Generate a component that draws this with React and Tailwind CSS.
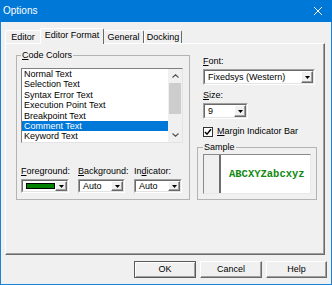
import React from "react";

function Arrow() {
  return (
    <svg width="5" height="3" viewBox="0 0 5 3">
      <path d="M0 0H5L2.5 3Z" fill="#000" />
    </svg>
  );
}

function DropBtn() {
  return (
    <div className="flex h-full w-[12px] items-center justify-center border border-t-white border-l-white border-b-[#696969] border-r-[#696969] bg-[#f0f0f0] shadow-[inset_-1px_-1px_0_#a0a0a0]">
      <Arrow />
    </div>
  );
}

function Combo({ className, children }) {
  return (
    <div className={`flex border border-t-[#a0a0a0] border-l-[#a0a0a0] border-b-white border-r-white ${className}`}>
      <div className="flex flex-1 border border-t-[#696969] border-l-[#696969] border-b-[#e3e3e3] border-r-[#e3e3e3] bg-white">
        <div className="flex min-w-0 flex-1 items-center pl-[3px] leading-[11px]">{children}</div>
        <DropBtn />
      </div>
    </div>
  );
}

function Chevron({ up }) {
  return (
    <svg width="7" height="4" viewBox="0 0 7 4">
      <path d={up ? "M0.5 3.5L3.5 0.8L6.5 3.5" : "M0.5 0.5L3.5 3.2L6.5 0.5"} fill="none" stroke="#505050" strokeWidth="1.1" />
    </svg>
  );
}

function Button({ children, def }) {
  return (
    <div
      className={`flex h-[17px] items-center justify-center border bg-[#f0f0f0] ${
        def
          ? "border-[#5a5a5a] shadow-[inset_1px_1px_0_#fff,inset_-1px_-1px_0_#a0a0a0]"
          : "border-t-white border-l-white border-b-[#696969] border-r-[#696969] shadow-[inset_-1px_-1px_0_#a0a0a0]"
      } ${children === "Help" ? "w-[61px]" : "w-[62px]"}`}
    >
      {children}
    </div>
  );
}

const items = [
  "Normal Text",
  "Selection Text",
  "Syntax Error Text",
  "Execution Point Text",
  "Breakpoint Text",
  "Comment Text",
  "Keyword Text",
];

export default function App() {
  return (
    <div className="flex h-[285px] w-[332px] flex-col bg-[#f0f0f0] font-['Liberation_Sans',Arial,sans-serif] text-[9px] leading-[11px] text-black">
      {/* Title bar */}
      <div className="flex h-[22px] shrink-0 items-center justify-between bg-[#0078d7] pl-[3px] pr-[9px] text-white">
        <span className="text-[10px] leading-[12px]">Options</span>
        <svg width="10" height="10" viewBox="0 0 10 10">
          <path d="M1 1L9 9M9 1L1 9" stroke="#fff" strokeWidth="1" />
        </svg>
      </div>
      {/* Body */}
      <div className="flex flex-1 flex-col border-x border-b border-[#1883d7] pt-[6px]">
        {/* Tabs */}
        <div className="flex h-[15px] items-end pl-[4px]">
          <div className="flex h-[13px] w-[35px] items-center justify-center rounded-t-[2px] border-t border-l border-t-white border-l-white">
            Editor
          </div>
          <div className="relative z-10 -mb-px flex h-[16px] w-[64px] items-start justify-center rounded-t-[2px] border-t border-l border-r border-t-white border-l-white border-r-[#696969] bg-[#f0f0f0] pt-[1px]">
            Editor Format
          </div>
          <div className="flex h-[13px] w-[40px] items-center justify-center rounded-t-[2px] border-t border-r border-t-white border-r-[#696969]">
            General
          </div>
          <div className="flex h-[13px] w-[38px] items-center justify-center rounded-t-[2px] border-t border-l border-r border-t-white border-l-white border-r-[#696969]">
            Docking
          </div>
        </div>
        {/* Panel */}
        <div className="ml-[4px] flex h-[212px] w-[320px] items-start border border-t-white border-l-white border-b-[#696969] border-r-[#696969] pl-[10px] pt-[6px] shadow-[inset_-1px_-1px_0_#a0a0a0]">
          {/* Code Colors group */}
          <fieldset className="w-[174px] border border-[#b4b4b4] px-[4px] pb-[6px]">
            <legend className="px-[1px] leading-[11px]">
              <u>C</u>ode Colors
            </legend>
            {/* Listbox */}
            <div className="mt-[7px] flex h-[75px] w-[162px] border border-t-[#7f7f7f] border-l-[#7f7f7f] border-b-[#e3e3e3] border-r-[#e3e3e3] bg-white">
              <div className="flex w-[146px] flex-col overflow-hidden">
                {items.map((t) => (
                  <div
                    key={t}
                    className={`h-[10.4px] shrink-0 pl-[2px] leading-[10.4px] ${
                      t === "Comment Text" ? "bg-[#0078d7] text-white" : ""
                    }`}
                  >
                    {t}
                  </div>
                ))}
              </div>
              <div className="flex w-[14px] flex-col bg-[#f0f0f0]">
                <div className="flex h-[14px] items-center justify-center">
                  <Chevron up />
                </div>
                <div className="mx-[1px] h-[31px] bg-[#cdcdcd]" />
                <div className="flex-1" />
                <div className="flex h-[14px] items-center justify-center">
                  <Chevron />
                </div>
              </div>
            </div>
            {/* Color combos */}
            <div className="mt-[23px] flex gap-[9px]">
              <div className="flex w-[48px] flex-col gap-[2px]">
                <span>
                  <u>F</u>oreground:
                </span>
                <Combo className="h-[14px] w-[48px]">
                  <div className="h-[6px] w-[29px] border border-black bg-[#008000]" />
                </Combo>
              </div>
              <div className="flex w-[47px] flex-col gap-[2px]">
                <span>
                  <u>B</u>ackground:
                </span>
                <Combo className="h-[14px] w-[47px]">Auto</Combo>
              </div>
              <div className="flex w-[48px] flex-col gap-[2px]">
                <span>
                  In<u>d</u>icator:
                </span>
                <Combo className="h-[14px] w-[48px]">Auto</Combo>
              </div>
            </div>
          </fieldset>
          {/* Right column */}
          <div className="ml-[7px] mt-[6px] flex w-[120px] flex-col">
            <span className="ml-[6px]">
              <u>F</u>ont:
            </span>
            <Combo className="ml-[6px] mt-[2px] h-[16px] w-[112px]">Fixedsys (Western)</Combo>
            <span className="ml-[6px] mt-[5px]">
              <u>S</u>ize:
            </span>
            <Combo className="ml-[6px] mt-[2px] h-[16px] w-[45px]">9</Combo>
            <div className="ml-[6px] mt-[7px] flex items-center gap-[4px]">
              <div className="flex h-[10px] w-[10px] items-center justify-center border border-[#333] bg-white">
                <svg width="8" height="8" viewBox="0 0 8 8">
                  <path d="M1 4L3 6.2L7 1.2" fill="none" stroke="#000" strokeWidth="1.5" />
                </svg>
              </div>
              <span>
                <u>M</u>argin Indicator Bar
              </span>
            </div>
            <fieldset className="mt-[5px] w-[120px] border border-[#b4b4b4] px-[5px] pb-[5px]">
              <legend className="px-[1px] leading-[11px]">Sample</legend>
              <div className="mt-[1px] flex h-[40px] w-[108px] border border-t-[#8a8a8a] border-l-[#8a8a8a] border-b-[#e8e8e8] border-r-[#e8e8e8]">
                <div className="w-[15px] bg-[#f0f0f0]" />
                <div className="w-[2px] bg-[#6e6e6e]" />
                <div className="flex flex-1 items-center bg-white pl-[8px] font-['Liberation_Mono',monospace] text-[10.5px] font-bold text-[#108a10]">
                  ABCXYZabcxyz
                </div>
              </div>
            </fieldset>
          </div>
        </div>
        {/* Buttons */}
        <div className="mt-[6px] flex justify-end gap-[4px] pr-[4px]">
          <Button def>OK</Button>
          <Button>Cancel</Button>
          <Button>Help</Button>
        </div>
      </div>
    </div>
  );
}
